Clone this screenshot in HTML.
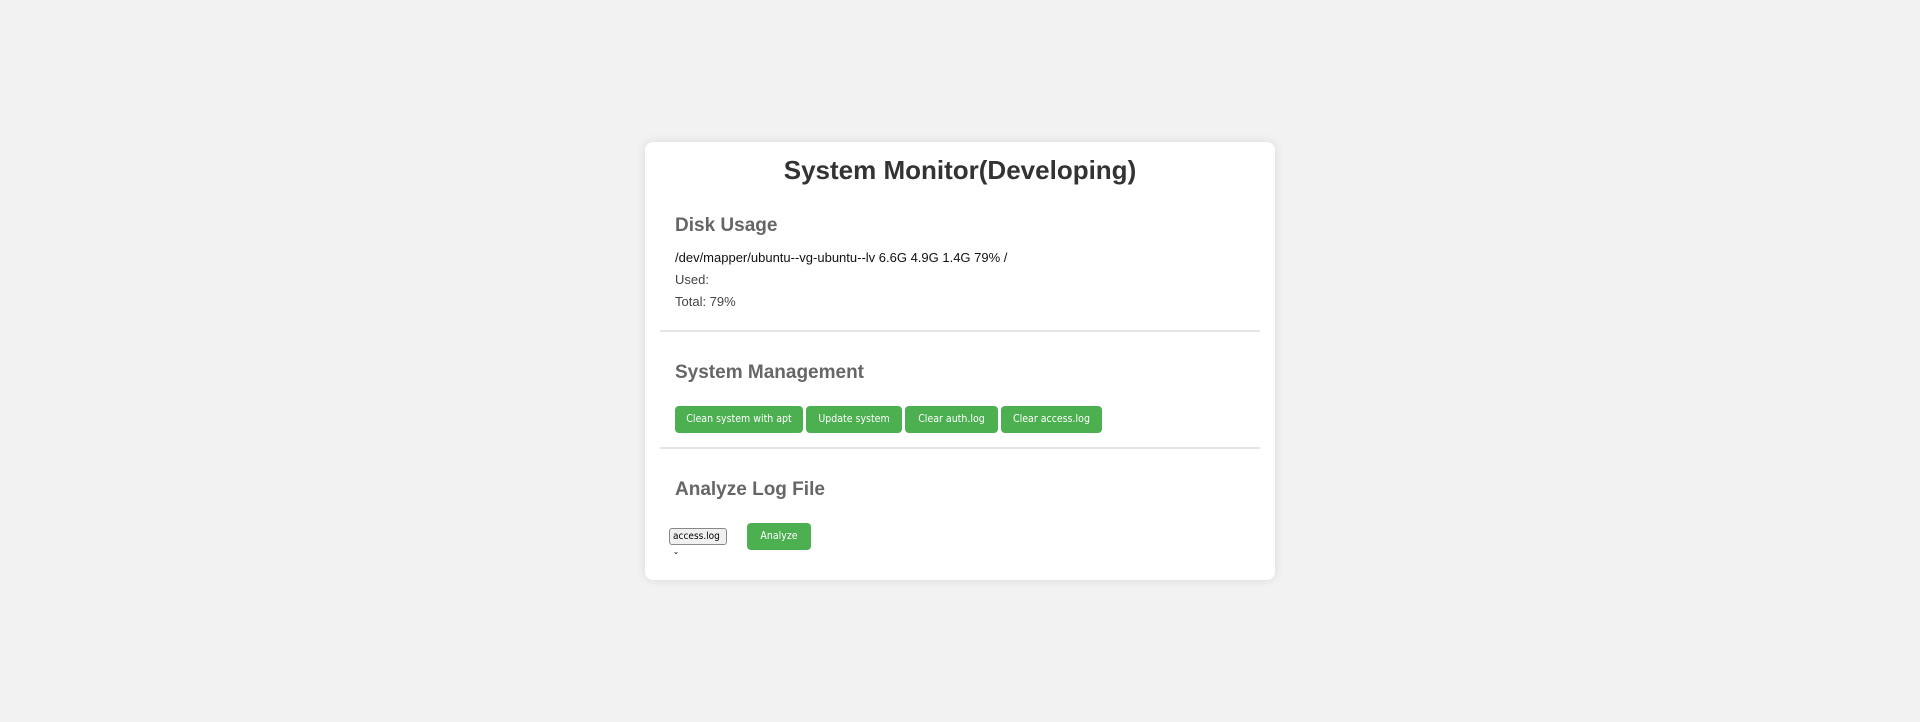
<!DOCTYPE html>
<html><head><style>
body{margin:0;background:#f2f2f2;font-family:"Liberation Sans",sans-serif;width:1920px;height:722px;overflow:hidden}
.card{position:absolute;left:645px;top:142px;width:630px;height:438px;background:#fff;border-radius:8px;box-shadow:0 0 10px rgba(0,0,0,.1)}
h1{position:absolute;left:0;right:0;top:155px;margin:0;text-align:center;font-size:26px;color:#333;line-height:30px}
h2{position:absolute;left:675px;margin:0;font-size:19px;color:#666;line-height:24px}
.t{position:absolute;left:675px;font-size:13px;line-height:16px;color:#444}
hr{position:absolute;left:660px;width:600px;margin:0;border:0;border-top:2px solid #e6e6e6}
.b{position:absolute;top:406px;height:27px;background:#4caf50;color:#fff;border-radius:4px;font-family:"DejaVu Sans Condensed","DejaVu Sans",sans-serif;font-size:10.5px;line-height:27px;text-align:center}
</style></head><body>
<div class="card"></div>
<h1>System Monitor(Developing)</h1>
<h2 style="top:214px">Disk Usage</h2>
<div class="t" style="top:250px;color:#111">/dev/mapper/ubuntu--vg-ubuntu--lv 6.6G 4.9G 1.4G 79% /</div>
<div class="t" style="top:272px">Used:</div>
<div class="t" style="top:294px">Total: 79%</div>
<hr style="top:330px">
<h2 style="top:361px">System Management</h2>
<div class="b" style="left:675px;width:128px">Clean system with apt</div>
<div class="b" style="left:806px;width:96px">Update system</div>
<div class="b" style="left:905px;width:93px">Clear auth.log</div>
<div class="b" style="left:1001px;width:101px">Clear access.log</div>
<hr style="top:447px">
<h2 style="top:478px">Analyze Log File</h2>
<div style="position:absolute;left:669px;top:528px;width:53px;height:15px;border:1px solid #888;border-radius:3px;background:#f0f0f0;font-size:10px;line-height:15px;padding-left:3px;box-sizing:content-box;font-family:'DejaVu Sans Condensed',sans-serif">access.log <span style="font-size:8px">&#8964;</span></div>
<div class="b" style="left:747px;top:523px;width:64px">Analyze</div>
</body></html>
